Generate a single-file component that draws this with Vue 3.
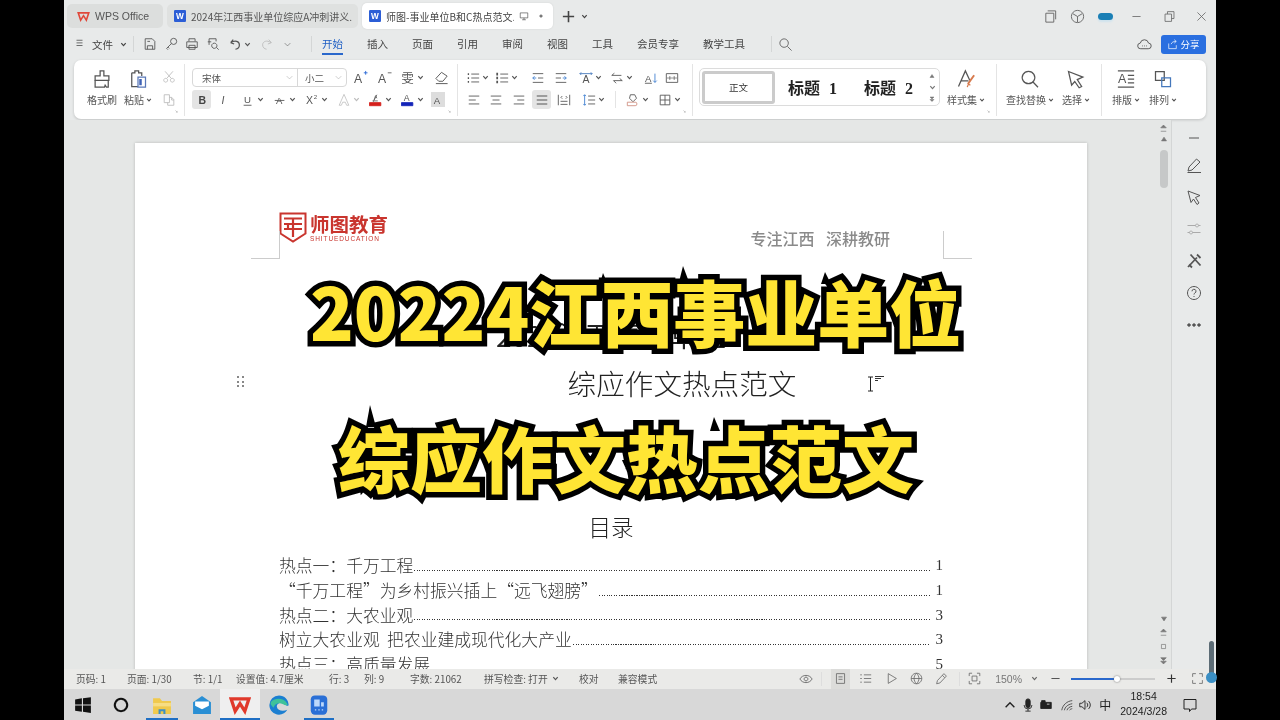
<script setup>
import { h } from 'vue'

const P = (d, s = 'currentColor', f = 'none', sw = 1) => ({ d, s, f, sw })
const T = (t, x, y, size, c = 'currentColor', w = 400, st = 'normal') => ({ t, x, y, size, c, w, st })

const icons = {
  brush: [P('M6.5 1.5h3v4h4v3.5h-11V5.5h4z'), P('M2.5 9v5.5h7.5l.5-1.5 1 1.5h1.5V9')],
  paste: [P('M3 3h2.5V1.5h3V3H11v2.5M3 3v11h5'), P('M8 6.5h6v8H8z', '#5a78b8'), P('M10 8v5', '#3f62b5', 'none', 2)],
  cut: [P('M3.5 1.5l7 8M12.5 1.5l-7 8'), P('M4.2 9.5a2.2 2.2 0 1 0 .01 0zM11.8 9.5a2.2 2.2 0 1 0 .01 0z')],
  copy: [P('M2.5 2h6v9h-6z'), P('M8 5h3l2.5 2.5V14H6.5v-3'), P('M11 5v3h2.5')],
  aplus: [T('A', 1, 13.5, 13), P('M11.5 3h4M13.5 1v4', '#2d6bd6')],
  aminus: [T('A', 1, 13.5, 13), P('M11.5 3h4', '#666')],
  wen: [T('雯', 1.5, 13.5, 13)],
  eraser: [P('M2 9l6-6.5 6 4-4.5 5.5H5z'), P('M2 14.5h12.5')],
  b: [T('B', 4, 12.5, 12, '#444', 700)],
  i: [T('I', 5, 12.5, 12, '#555', 400, 'italic')],
  u: [T('U', 3.5, 11.5, 11), P('M3 14h9')],
  strike: [T('A', 3.5, 12.5, 11), P('M2 8.5h11')],
  sup: [T('X', 1, 13, 12), T('2', 10, 7, 7)],
  glow: [P('M8 1.5L2.5 14h2.5l1.5-3.5h3L11 14h2.5z', '#c4c4c4')],
  fcolor: [P('M5 10l2.5-7 1.5 3M4 9h6M9 2L6 8', '#666'), P('M.5 11h13v3.5H.5z', '#d5201c', '#d5201c')],
  bcolor: [T('A', 3, 9.5, 10), P('M.5 11h13v3.5H.5z', '#1324b8', '#1324b8')],
  abox: [T('A', 3, 12.5, 11)],
  bul: [P('M6 3.5h9M6 8h9M6 12.5h9'), P('M2 3.5h1.5M2 8h1.5M2 12.5h1.5', 'currentColor', 'none', 2)],
  num: [P('M6 3.5h9M6 8h9M6 12.5h9'), P('M2.5 2v3M2.5 6.5v3M2.5 11v3', 'currentColor', 'none', 2)],
  dedent: [P('M2 3h12M8 8h6M2 13h12'), P('M6 8H2M4 6L2 8l2 2', '#3f7fd0')],
  indent: [P('M2 3h12M2 8h6M2 13h12'), P('M10 8h4M12 6l2 2-2 2', '#3f7fd0')],
  aspace: [T('A', 4, 14, 12), P('M1 3h14M2.5 1.5L1 3l1.5 1.5M13.5 1.5L15 3l-1.5 1.5', '#4477bb')],
  swap: [P('M2 5h11M5 2.5L2 5M4 11h10M11 8.5l3 2.5M4 11l3 3')],
  sort: [T('A', 1, 12, 11), P('M1 14h8'), P('M12.5 3v10M10.5 11l2 2 2-2', '#3f7fd0')],
  tbl: [P('M1.5 3h13M1.5 13h13M1.5 3v10M14.5 3v10M5.5 6v4M10.5 6v4'), P('M1.5 8h13', '#888')],
  al: [P('M2 3.5h12M2 8h8M2 12.5h12')],
  ac: [P('M2 3.5h12M4 8h8M2 12.5h12')],
  ar: [P('M2 3.5h12M6 8h8M2 12.5h12')],
  aj: [P('M2 3.5h12M2 8h12M2 12.5h12', 'currentColor', 'none', 1.2)],
  dist: [P('M1.5 2v12M14.5 2v12M4 13h8M4 9.5h8M6 3.5L4.5 5 6 6.5M10 3.5L11.5 5 10 6.5')],
  lsp: [P('M7 3.5h8M7 8h8M7 12.5h8'), P('M3 2v12M1.5 3.5L3 2l1.5 1.5M1.5 12.5L3 14l1.5-1.5', '#3f7fd0')],
  shade: [P('M5 2h5l2 4-4 4-4-4z'), P('M1.5 10.5h9a2 2 0 0 1 0 4h-9z', '#cf8f80')],
  border: [P('M2.5 2.5h11v11h-11zM8 2.5v11M2.5 8h11')],
  style: [P('M2 14L7.5 1.5 11 9M4 9.5h6'), P('M14.5 5l-5 7', '#d77a4d', 'none', 1.6), P('M9 14.5l1-2.5 1.5 1', '#d77a4d')],
  find: [P('M6.8 1.8a5 5 0 1 0 .01 0zM10.4 10.4l4 4.2')],
  sel: [P('M2 2l11.5 4.5-4.5 2 3.5 5.5-2 1-3.5-5-2.5 3z')],
  lay: [P('M1.5 1.5h13'), T('A', 1.5, 11.5, 10), P('M9.5 5h5M9.5 8h5M9.5 11h5M1.5 14.5h13')],
  arr: [P('M2 2h7v7H2z'), P('M7 7h7v7H7z', '#4477bb')],
  launch: [P('M1 1l5 5M6 2.5V6H2.5')],
  menu: [P('M2 3h8M2 6.5h8M2 10h8')],
  save: [P('M2.5 2h8l3 3v9h-11z M5 14v-4h6v4 M5 5h3')],
  key: [P('M11 1.5a3.5 3.5 0 1 1-3.5 3.5 3.5 3.5 0 0 1 3.5-3.5z M8.5 7.5L3 13l1.5 1.5 M4.5 11.5l1.5 1.5')],
  print: [P('M4.5 5V2h7v3M2 5.5h12v6.5H2zM4.5 9.5h7V14h-7z')],
  prev: [P('M3.5 9V2h8v3M2 5.5h4'), P('M9.5 7a3 3 0 1 0 .01 0zM12 12l2.5 2.5')],
  undo: [P('M3 6.5L6 3M3 6.5L7 8M3.5 6.5C8 3 13 5 13 9c0 3-2 4.5-4.5 5', 'currentColor', 'none', 1.4)],
  redo: [P('M13 6.5L10 3M13 6.5L9 8M12.5 6.5C8 3 3 5 3 9c0 3 2 4.5 4.5 5')],
  down: [P('M3 5.5l5 5 5-5')],
  chev: [P('M3 5l5 5.500 5-5.500', 'currentColor', 'none', 2.800)],
  search: [P('M6.5 2a4.5 4.5 0 1 0 .01 0zM10 10l4.5 4.5')],
  cloud: [P('M4 12.5a3 3 0 0 1-.5-6 4.5 4.5 0 0 1 8.8 0 3 3 0 0 1-.3 6z'), P('M5.5 9.5h.8M7.7 9.5h.8M9.8 9.5h.8')],
  share: [P('M2.5 6.5v7.5h11V9M6 7.5c1-3 3.5-4 7-4M10.5 1l3 2.5-3 2.5', '#fff')],
  layers: [P('M3 4.5h8.5V14H3zM5 2h8.5v9')],
  cube: [P('M8 1.5a6.5 6.5 0 1 0 .01 0zM3 5l5 3 5-3M8 8v6')],
  min: [P('M3 8h10')],
  rest: [P('M2.5 5h8v9h-8zM5.5 5V2h8v8.5h-3')],
  close: [P('M3 3l10 10M13 3L3 13')],
  plus: [P('M8 2v12M2 8h12', 'currentColor', 'none', 1.7)],
  dot: [P('M8 6a2 2 0 1 0 .01 0z', '#777', '#777')],
  monitor: [P('M2 3h12v8H2zM8 11v3M5 14h6')],
  pen: [P('M10.5 2l3.5 3L6 13 2 14l1-4zM1.5 15.5h13.5')],
  cursor: [P('M2 2l12 4.5-4.5 2L13 14l-2 1.5-3.5-5.5L5 13.5z')],
  sliders: [P('M1.5 4.5h8M12.5 4.5h2M1.5 11.5h2M6.5 11.5h8'), P('M11 3a1.5 1.5 0 1 0 .01 0zM5 10a1.5 1.5 0 1 0 .01 0z')],
  tools: [P('M2 14L11 4.5M4.5 1.5l10 11M3 11.5l3 3M11 1.5l3.5 3.5', 'currentColor', 'none', 1.8)],
  help: [P('M8 1.5a6.5 6.5 0 1 0 .01 0z'), P('M6 6.3a2 2 0 1 1 2.8 1.8c-.6.3-.8.7-.8 1.4M8 11v1')],
  more: [P('M3 6.700a1.300 1.300 0 1 0 .01 0zM8 6.700a1.300 1.300 0 1 0 .01 0zM13 6.700a1.300 1.300 0 1 0 .01 0z', 'currentColor', 'currentColor')],
  eye: [P('M1 8c3-5.5 11-5.5 14 0-3 5.5-11 5.5-14 0zM8 5.8a2.2 2.2 0 1 0 .01 0z')],
  page: [P('M3 2h10v12H3zM5.5 6h5M5.5 9h5')],
  outline: [P('M6 3.5h9M6 8h9M6 12.5h9M1.5 3.5h2M1.5 8h2M1.5 12.5h2')],
  play: [P('M4 2l10 6-10 6z')],
  globe: [P('M8 1.5a6.5 6.5 0 1 0 .01 0zM1.5 8h13M8 1.5c-4 4-4 9 0 13M8 1.5c4 4 4 9 0 13')],
  edit: [P('M11 2l3 3-8 8.5-4 1 1-4zM9 4l3 3')],
  fit: [P('M1.5 5V1.5H5M11 1.5h3.5V5M1.5 11v3.5H5M11 14.5h3.5V11M5 5h6v6H5z')],
  full: [P('M2 6V2h4M10 2h4v4M2 10v4h4M10 14h4v-4')],
  up: [P('M3 10.5l5-5 5 5', 'currentColor', 'none', 1.6)],
  mic: [P('M8 1a2.5 2.5 0 0 1 2.5 2.5v5a2.5 2.5 0 0 1-5 0v-5A2.5 2.5 0 0 1 8 1z', '#222', '#222'), P('M8 12v3M5 15h6M3.5 8a4.5 4.5 0 0 0 9 0', '#222')],
  batt: [P('M2 5h12v7H2z', '#222', '#222'), P('M3 3h4v2H3z', '#222', '#222'), P('M9 7h3', '#d8d8d8')],
  wifi: [P('M2 14C3 8 8 3.5 14 3M5 14c.7-3.5 3.5-6.5 9-7.5M8 14c.5-2 2.5-4 6-4.5M11 14c.3-1 1.500-1.500 3-1.800', '#444')],
  vol: [P('M2 6h2.500L8 3v10L4.500 10H2zM10 5.500c1.500 1.500 1.500 3.500 0 5M12 3.500c2.700 2.700 2.700 6.300 0 9', '#222')],
  note: [P('M2 2.500h12v9.500h-4.500L7.500 14.500V12H2z', '#222')],
  win: [P('M1 3l6-1v5.500H1zM8 2l7-1v6.500H8zM1 8.500h6V14L1 13zM8 8.500h7V15l-7-1z', 'none', '#111')],
  ring: [P('M8 2.500a5.500 5.500 0 1 0 .01 0z', '#111', 'none', 1.8)],
  folder: [P('M1.500 3h5l1.500 2h6.500v9.500H1.500z', 'none', '#f0c94d'), P('M1.500 6.500h13V9h-13z', 'none', '#f7dd84'), P('M5.500 11h5v3.500h-1.500V12.500h-2v2H5.500z', 'none', '#3d8fc5')],
  mail: [P('M1.500 6L8 1.500 14.500 6v8.500h-13z', 'none', '#2a8fd4'), P('M3 5.500h10v3L8 11 3 8.500z', 'none', '#fff')],
  wps: [P('M1.500 3.500h13l-3 9-3.500-5.500-3.500 5.500z', '#e0392b', 'none', 2.400)],
  edge: [P('M8 1a7 7 0 0 0-7 7c0 3.900 3.100 7 7 7 2.600 0 4.900-1.400 6-3.500-3 1.500-7 .8-7.500-2C6 7 9 5.500 12 7.500c2 1.300 2.500 1.500 3 .5 0-4-3.100-7-7-7z', 'none', '#1b7fd1'), P('M2 6c2-3 9-4 12 1 1 1.500-1.500 1.500-3 .5C8 6 5 7 4 10 3 8.500 1.500 8 2 6z', 'none', '#3fc29a')],
  appb: [P('M5 1h6A3 3 0 0 1 14 4v8a3 3 0 0 1-3 3H5a3 3 0 0 1-3-3V4a3 3 0 0 1 3-3z', 'none', '#2a6fd6'), P('M4.500 4h4v5h-4zM9.500 6h2v3h-2z', 'none', '#bcd8fb'), P('M5 11.500h1M7.500 11.500h1M10 11.500h1', '#bcd8fb')],
  wdoc: [P('M1.500 0h13A1.500 1.500 0 0 1 16 1.500v13a1.500 1.500 0 0 1-1.500 1.500h-13A1.500 1.500 0 0 1 0 14.500v-13A1.500 1.500 0 0 1 1.500 0z', 'none', '#2c5ed6'), T('W', 2.800, 12.500, 11, '#fff', 700)],
  wpslogo: [P('M1.500 3.500h13l-3 9-3.500-5.500-3.500 5.500z', '#e0483a', 'none', 2)],
  triup: [P('M4 11l4-6 4 6z', '#777', '#777')],
  pgup: [P('M4 7l4-4 4 4zM4 12h8', '#777', '#777')],
  pgdn: [P('M4 4l4 4 4-4zM4 9l4 4 4-4z', '#777', '#777')],
  square: [P('M5 5h6v6H5z', '#777')],
}

const Ic = (props) => {
  const els = icons[props.name] || []
  return h('svg', { class: 'ic', width: props.s || 16, height: props.s || 16, viewBox: '0 0 16 16' },
    els.map((e) => e.t
      ? h('text', { x: e.x, y: e.y, 'font-size': e.size, 'font-weight': e.w, 'font-style': e.st, fill: e.c, 'font-family': '"Liberation Sans","Noto Sans CJK SC",sans-serif' }, e.t)
      : h('path', { d: e.d, stroke: e.s, fill: e.f, 'stroke-width': e.sw })))
}
Ic.props = ['name', 's']

const I = (i, w, o = {}) => ({ i, w, ...o })
const S = (w) => ({ w })

const fontRow1 = [I('aplus', 26), I('aminus', 23), I('wen', 32, { c: 1 }), I('eraser', 26)]
const fontRow2 = [I('b', 19, { on: 1 }), I('i', 25), I('u', 32, { c: 1 }), I('strike', 32, { c: 1 }), I('sup', 32, { c: 1 }), I('glow', 32, { c: 1, dim: 1 }), I('fcolor', 32, { c: 1 }), I('bcolor', 32, { c: 1 }), I('abox', 19, { box: 1 })]
const paraRow1 = [I('bul', 28, { c: 1 }), I('num', 30, { c: 1 }), S(6), I('dedent', 22), S(1), I('indent', 22), I('aspace', 36, { c: 1 }), I('swap', 26, { c: 1 }), S(6), I('sort', 22), I('tbl', 20)]
const paraRow2 = [I('al', 22), I('ac', 22), S(1), I('ar', 22), S(2), I('aj', 19, { on: 1 }), S(2), I('dist', 22), I('lsp', 36, { c: 1 }), S(4), { sep: 1, w: 1 }, S(5), I('shade', 32, { c: 1 }), I('border', 32, { c: 1 })]

const tail = [
  { t: '样式集', i: 'style', w: 46, s: 20, c: 1 },
]
const findGroup = [
  { t: '查找替换', i: 'find', w: 56, s: 20, c: 1 },
  { t: '选择', i: 'sel', w: 36, s: 20, c: 1 },
]
const layGroup = [
  { t: '排版', i: 'lay', w: 38, s: 20, c: 1 },
  { t: '排列', i: 'arr', w: 36, s: 20, c: 1 },
]

const menus = ['开始', '插入', '页面', '引用', '审阅', '视图', '工具', '会员专享', '教学工具']
const quick = [I('save', 21), I('key', 21), I('print', 21), I('prev', 21), I('undo', 33, { c: 1 }), I('redo', 21, { dim: 1 }), I('down', 21)]

const stats = [
  { t: '页码: 1', w: 51 }, { t: '页面: 1/30', w: 66 }, { t: '节: 1/1', w: 43 }, { t: '设置值: 4.7厘米', w: 93 },
  { t: '行: 3', w: 35 }, { t: '列: 9', w: 46 }, { t: '字数: 21062', w: 74 }, { t: '拼写检查: 打开', w: 95, c: 1 },
  { t: '校对', w: 39 }, { t: '兼容模式', w: 60 },
]
const sideIcons = [
  { n: 'min', c: '' }, { n: 'pen', c: '' }, { n: 'cursor', c: '' }, { n: 'sliders', c: 'dim' },
  { n: 'tools', c: '' }, { n: 'help', c: '' }, { n: 'more', c: '' },
]
const toc = [
  { t: '热点一：千万工程', n: 1 },
  { t: '“千万工程”为乡村振兴插上“远飞翅膀”', n: 1 },
  { t: '热点二：大农业观', n: 3 },
  { t: '树立大农业观  把农业建成现代化大产业', n: 3 },
  { t: '热点三：高质量发展', n: 5 },
]
const taskbar = [
  { n: 'win', w: 38, s: 18 }, { n: 'ring', w: 38, s: 18 }, { n: 'folder', w: 44, s: 22, run: 1 },
  { n: 'mail', w: 36, s: 22 }, { n: 'wps', w: 40, s: 22, run: 1, act: 1 }, { n: 'edge', w: 38, s: 22 }, { n: 'appb', w: 42, s: 22, run: 1 },
]
const tray = ['up', 'mic', 'batt', 'wifi', 'vol']
const spikes = [
  [603, 273, 14], [683, 266, 16], [825, 272, 12], [370, 405, 22], [714, 417, 14],
]
const spikePath = (x, y, hgt) => `M${x} ${y}L${x + 6} ${y + hgt}H${x - 4}z`
</script>

<template>
  <div class="screen">
    <div class="win">
      <header class="tabs">
        <div class="tab home"><Ic name="wpslogo" :s="13" /><span>WPS Office</span></div>
        <div class="tab doc"><Ic name="wdoc" :s="12" /><span class="tab-t">2024年江西事业单位综应A冲刺讲义.</span></div>
        <div class="tab cur"><Ic name="wdoc" :s="12" /><span class="tab-t short">师图-事业单位B和C热点范文.</span><Ic name="monitor" :s="10" /><Ic name="dot" :s="10" class="dotic" /></div>
        <div class="plus"><Ic name="plus" :s="15" /><Ic name="chev" :s="7" /></div>
        <div class="winbtns">
          <Ic name="layers" :s="15" /><Ic name="cube" :s="15" />
          <span class="hat"></span>
          <Ic name="min" :s="13" /><Ic name="rest" :s="13" /><Ic name="close" :s="13" />
        </div>
      </header>

      <nav class="menubar">
        <div class="file"><Ic name="menu" :s="12" /><span>文件</span><Ic name="chev" :s="7" /></div>
        <i class="vsep"></i>
        <div class="quick">
          <div v-for="(q, k) in quick" :key="k" class="q" :class="{ dim: q.dim }" :style="{ width: q.w + 'px' }">
            <Ic :name="q.i" :s="q.i === 'down' ? 9 : 14" /><Ic v-if="q.c" name="chev" :s="7" />
          </div>
        </div>
        <i class="vsep v2"></i>
        <div class="menus">
          <span v-for="(m, k) in menus" :key="m" :class="{ active: k === 0 }">{{ m }}</span>
        </div>
        <i class="vsep v3"></i>
        <Ic name="search" :s="15" class="msearch" />
        <div class="mright">
          <Ic name="cloud" :s="15" />
          <button class="share"><Ic name="share" :s="11" /><span>分享</span></button>
        </div>
      </nav>

      <div class="ribbon-wrap">
        <section class="ribbon">
          <div class="grp g1">
            <div class="big w36"><Ic name="brush" :s="20" /><span>格式刷</span></div>
            <div class="big w36"><Ic name="paste" :s="20" /><span>粘贴<Ic name="chev" :s="6" class="inl" /></span></div>
            <div class="smallcol"><Ic name="cut" :s="14" /><Ic name="copy" :s="14" /></div>
            <Ic name="launch" :s="6" class="launch" />
          </div>
          <div class="grp g2">
            <div class="rows">
              <div class="row">
                <div class="fontbox">
                  <span class="fname">宋体<Ic name="down" :s="9" /></span>
                  <span class="fsize">小二<Ic name="down" :s="9" /></span>
                </div>
                <div v-for="(b, k) in fontRow1" :key="k" class="tb" :style="{ width: b.w + 'px' }"><Ic :name="b.i" :s="15" /><Ic v-if="b.c" name="chev" :s="7" /></div>
              </div>
              <div class="row">
                <div v-for="(b, k) in fontRow2" :key="k" class="tb" :class="{ on: b.on, dim: b.dim }" :style="{ width: b.w + 'px' }">
                  <span v-if="b.box" class="abox"><Ic :name="b.i" :s="14" /></span>
                  <Ic v-else :name="b.i" :s="14" /><Ic v-if="b.c" name="chev" :s="7" />
                </div>
              </div>
            </div>
            <Ic name="launch" :s="6" class="launch" />
          </div>
          <div class="grp g3">
            <div class="rows">
              <div class="row">
                <template v-for="(b, k) in paraRow1" :key="k">
                  <div v-if="b.i" class="tb" :style="{ width: b.w + 'px' }"><Ic :name="b.i" :s="14" /><Ic v-if="b.c" name="chev" :s="7" /></div>
                  <i v-else class="sp" :style="{ width: b.w + 'px' }"></i>
                </template>
              </div>
              <div class="row">
                <template v-for="(b, k) in paraRow2" :key="k">
                  <div v-if="b.i" class="tb" :class="{ on: b.on }" :style="{ width: b.w + 'px' }"><Ic :name="b.i" :s="14" /><Ic v-if="b.c" name="chev" :s="7" /></div>
                  <i v-else-if="b.sep" class="rsep"></i>
                  <i v-else class="sp" :style="{ width: b.w + 'px' }"></i>
                </template>
              </div>
            </div>
            <Ic name="launch" :s="6" class="launch" />
          </div>
          <div class="grp g4">
            <div class="styles">
              <div class="st-normal">正文</div>
              <div class="st-h h1">标题 1</div>
              <div class="st-h h2">标题 2</div>
              <div class="stepper"><Ic name="triup" :s="8" /><Ic name="chev" :s="7" /><Ic name="pgdn" :s="8" /></div>
            </div>
            <div v-for="b in tail" :key="b.t" class="big" :style="{ width: b.w + 'px' }"><Ic :name="b.i" :s="b.s" /><span>{{ b.t }}<Ic name="chev" :s="6" class="inl" /></span></div>
            <Ic name="launch" :s="6" class="launch" />
          </div>
          <div class="grp g5">
            <div v-for="b in findGroup" :key="b.t" class="big" :style="{ width: b.w + 'px' }"><Ic :name="b.i" :s="b.s" /><span>{{ b.t }}<Ic name="chev" :s="6" class="inl" /></span></div>
          </div>
          <div class="grp g6">
            <div v-for="b in layGroup" :key="b.t" class="big" :style="{ width: b.w + 'px' }"><Ic :name="b.i" :s="b.s" /><span>{{ b.t }}<Ic name="chev" :s="6" class="inl" /></span></div>
          </div>
        </section>
      </div>

      <main class="docarea">
        <div class="view">
          <article class="page">
            <i class="crop tl"></i><i class="crop tr"></i>
            <div class="pghead">
              <div class="logo">
                <svg class="shield" width="28" height="31" viewBox="0 0 28 31">
                  <path d="M1.500 1.500h25v20l-12.500 8-12.500-8z" fill="none" stroke="#c9352e" stroke-width="2" />
                  <path d="M5 6.500h18M5 12h18M5 17h18M14 6.500V25M9 12v5" fill="none" stroke="#c9352e" stroke-width="2.200" />
                </svg>
                <div class="brand"><b>师图教育</b><small>SHITUEDUCATION</small></div>
              </div>
              <div class="motto">专注江西 深耕教研</div>
            </div>
            <h1 class="t0">2024江西事业单位</h1>
            <h2 class="t1">综应作文热点范文</h2>
            <h3 class="t2">目录</h3>
            <ul class="toc">
              <li v-for="(r, k) in toc" :key="k"><span class="toct">{{ r.t }}</span><i class="dots"></i><span class="tocn">{{ r.n }}</span></li>
            </ul>
            <div class="grip"><i v-for="n in 6" :key="n"></i></div>
            <div class="ibeam"><svg width="18" height="16" viewBox="0 0 18 16"><path d="M1 1h5M1 15h5M3.500 1v14" stroke="#222" fill="none" /><path d="M8 0.500h9M8 2.500h6M8 4.500h3" stroke="#333" fill="none" /></svg></div>
          </article>
        </div>
        <div class="vscroll">
          <Ic name="pgup" :s="11" /><Ic name="triup" :s="10" />
          <div class="thumb"></div>
          <div class="vend"><Ic name="triup" :s="10" class="flip" /><Ic name="pgup" :s="11" /><Ic name="square" :s="11" /><Ic name="pgdn" :s="11" /></div>
        </div>
        <aside class="side">
          <div v-for="s in sideIcons" :key="s.n" class="sicon" :class="s.c"><Ic :name="s.n" :s="16" /></div>
        </aside>
      </main>

      <footer class="status">
        <div class="stats">
          <span v-for="s in stats" :key="s.t" :style="{ width: s.w + 'px' }">{{ s.t }}<Ic v-if="s.c" name="chev" :s="7" class="inl" /></span>
        </div>
        <div class="sright">
          <Ic name="eye" :s="14" /><i class="ssep"></i>
          <span class="pagebtn"><Ic name="page" :s="13" /></span>
          <Ic name="outline" :s="13" class="m1" /><Ic name="play" :s="13" class="m2" /><Ic name="globe" :s="13" class="m3" /><Ic name="edit" :s="13" class="m3" />
          <i class="ssep s2"></i>
          <Ic name="fit" :s="13" class="m4" />
          <span class="zoom">150%</span><Ic name="chev" :s="7" class="m5" />
          <Ic name="min" :s="13" class="m6" />
          <div class="slider"><i class="fill"></i><i class="knob"></i></div>
          <Ic name="plus" :s="11" class="m7" /><Ic name="full" :s="13" class="m8" />
        </div>
      </footer>

      <div class="taskbar">
        <div class="apps">
          <div v-for="a in taskbar" :key="a.n" class="app" :class="{ act: a.act, run: a.run }" :style="{ width: a.w + 'px' }"><Ic :name="a.n" :s="a.s" /></div>
        </div>
        <div class="tray">
          <Ic v-for="n in tray" :key="n" :name="n" :s="14" />
          <span class="ime">中</span>
          <div class="clock"><span>18:54</span><span>2024/3/28</span></div>
          <Ic name="note" :s="16" class="noteic" />
        </div>
      </div>
    </div>

    <div class="rail"><i></i></div>
    <svg class="spikes" width="1280" height="720" viewBox="0 0 1280 720"><path v-for="(p, k) in spikes" :key="k" :d="spikePath(p[0], p[1], p[2])" fill="#000" /></svg>
    <div class="cap c1">20224江西事业单位</div>
    <div class="cap c2">综应作文热点范文</div>
  </div>
</template>

<style scoped>
.screen { position: relative; width: 1280px; height: 720px; background: #000; overflow: hidden; display: flex; justify-content: center; font-family: "Noto Sans CJK SC", "Liberation Sans", sans-serif; color: #444; filter: blur(.3px); }
.win { width: 1152px; height: 720px; background: #e8eaea; display: flex; flex-direction: column; }
i { font-style: normal; }

.tabs { height: 32px; display: flex; align-items: center; padding-left: 3px; gap: 4px; flex: none; box-sizing: border-box; }
.tab { height: 24px; border-radius: 5px; display: flex; align-items: center; font-size: 10px; color: #555; flex: none; box-sizing: border-box; }
.home { width: 96px; background: #dcdedd; padding-left: 10px; gap: 5px; font-family: "Liberation Sans", sans-serif; font-size: 10.5px; }
.doc { width: 191px; background: #dfe1e0; padding-left: 7px; gap: 5px; }
.cur { width: 191px; height: 26px; background: #fff; padding-left: 7px; gap: 5px; color: #444; box-shadow: 0 0 2px rgba(0,0,0,.1); }
.tab-t { white-space: nowrap; overflow: hidden; width: 165px; }
.short { width: 128px; }
.dotic { margin-left: 2px; }
.plus { display: flex; align-items: center; gap: 5px; margin-left: 4px; color: #444; }
.winbtns { margin-left: auto; display: flex; align-items: center; color: #666; padding-right: 8px; }
.winbtns > :nth-child(1) { margin-right: 12px; }
.winbtns > :nth-child(2) { margin-right: 13px; }
.winbtns > :nth-child(4) { margin-right: 20px; }
.winbtns > :nth-child(5) { margin-right: 19px; }
.hat { width: 15px; height: 7px; border-radius: 4px; background: #1a7fb5; margin-right: 17px; box-shadow: 0 2px 2px #cfe3ee; }

.menubar { height: 28px; flex: none; display: flex; align-items: center; font-size: 10.500px; color: #444; padding: 0 0 4px 11px; box-sizing: border-box; }
.file { display: flex; align-items: center; gap: 5px; width: 58px; }
.file > :last-child { margin-left: 2px; }
.vsep { width: 1px; height: 16px; background: #d4d6d6; flex: none; }
.quick { display: flex; margin-left: 5px; margin-right: 7px; width: 165px; flex: none; }
.q { display: flex; align-items: center; justify-content: center; gap: 2px; color: #555; flex: none; }
.q.dim { color: #bbb; }
.menus { display: flex; gap: 24px; margin-left: 10px; line-height: 22px; white-space: nowrap; }
.menus span { height: 22px; position: relative; }
.menus .active { color: #1f5fc4; }
.menus .active::after { content: ""; position: absolute; left: 0; right: 0; bottom: 0; height: 2px; background: #2a68cc; }
.v3 { margin-left: 26px; }
.msearch { margin-left: 6px; color: #666; }
.mright { margin-left: auto; display: flex; align-items: center; gap: 9px; padding-right: 10px; color: #555; }
.share { width: 45px; height: 19px; border: 0; border-radius: 3px; background: #2a6fe0; color: #fff; font: inherit; font-size: 9.500px; display: flex; align-items: center; justify-content: center; gap: 2px; padding: 0; }

.ribbon-wrap { height: 60px; flex: none; padding: 0 10px; box-sizing: border-box; }
.ribbon { height: 59px; background: #fff; border-radius: 7px; box-shadow: 0 1px 3px rgba(0,0,0,.18); display: flex; }
.grp { position: relative; display: flex; align-items: flex-start; margin: 4px 0; height: 52px; border-right: 1px solid #e4e4e4; flex: none; box-sizing: border-box; }
.g1 { width: 111px; padding-left: 10px; }
.g2 { width: 273px; padding-left: 7px; }
.g3 { width: 235px; padding-left: 5px; }
.g4 { width: 304px; padding-left: 6px; }
.g5 { width: 105px; padding-left: 5px; gap: 0; }
.g6 { width: 103px; border-right: 0; padding-left: 5px; }
.launch { position: absolute; right: 3px; bottom: 0; color: #888; }
.big { display: flex; flex-direction: column; align-items: center; font-size: 10px; color: #555; padding-top: 5px; gap: 4px; white-space: nowrap; flex: none; }
.big span { display: flex; align-items: center; gap: 2px; line-height: 14px; }
.w36 { width: 36px; }
.smallcol { width: 26px; display: flex; flex-direction: column; align-items: center; gap: 9px; padding-top: 6px; color: #bbb; }
.rows { display: flex; flex-direction: column; padding-top: 4px; gap: 3px; }
.row { display: flex; height: 19px; align-items: center; }
.fontbox { width: 155px; height: 19px; border: 1px solid #d8d8d8; border-radius: 4px; box-sizing: border-box; display: flex; font-size: 9.500px; color: #555; flex: none; }
.fname { width: 105px; padding: 0 3px 0 9px; display: flex; align-items: center; justify-content: space-between; border-right: 1px solid #d8d8d8; box-sizing: border-box; }
.fsize { flex: 1; padding: 0 3px 0 7px; display: flex; align-items: center; justify-content: space-between; }
.fname .ic, .fsize .ic { color: #aaa; }
.tb { height: 19px; display: flex; align-items: center; justify-content: center; gap: 2px; color: #555; flex: none; border-radius: 3px; }
.tb.on { background: #e4e4e4; }
.tb.dim { color: #bbb; }
.abox { background: #ddd; width: 14px; height: 15px; display: flex; align-items: center; justify-content: center; }
.sp { display: block; flex: none; height: 1px; }
.rsep { display: block; width: 1px; height: 17px; background: #e4e4e4; flex: none; }
.styles { width: 241px; height: 38px; border: 1px solid #dcdcdc; border-radius: 5px; margin-top: 4px; box-sizing: border-box; display: flex; align-items: center; flex: none; position: relative; }
.st-normal { width: 73px; height: 33px; margin-left: 2px; border: 3px solid #cbcbcb; border-radius: 3px; box-sizing: border-box; display: flex; align-items: center; justify-content: center; font-size: 9.500px; color: #333; flex: none; }
.st-h { font-size: 16px; font-weight: 700; color: #222; white-space: nowrap; word-spacing: 5px; font-family: "Liberation Serif", "Noto Sans CJK SC", serif; }
.h1 { margin-left: 13px; width: 76px; }
.h2 { width: 60px; }
.stepper { margin-left: auto; width: 14px; display: flex; flex-direction: column; align-items: center; gap: 4px; color: #777; }
.g4 > .big { margin-left: 3px; }

.docarea { height: 549px; flex: none; display: flex; overflow: hidden; margin-top: 0; }
.view { width: 1092px; padding: 23px 0 0 71px; box-sizing: border-box; overflow: hidden; flex: none; background: #e5e7e6; }
.page { position: relative; width: 952px; height: 900px; background: #fff; box-shadow: 0 0 3px rgba(0,0,0,.2); box-sizing: border-box; padding: 69px 144px 0; }
.crop { position: absolute; width: 28px; height: 27px; top: 88px; }
.tl { left: 116px; border-right: 1px solid #ccc; border-bottom: 1px solid #ccc; }
.tr { left: 808px; border-left: 1px solid #ccc; border-bottom: 1px solid #ccc; }
.pghead { display: flex; justify-content: space-between; height: 31px; padding-right: 53px; }
.logo { display: flex; gap: 3px; color: #c9352e; }
.brand { display: flex; flex-direction: column; line-height: 1; }
.brand b { font-size: 19.500px; font-weight: 700; line-height: 23px; letter-spacing: 0; }
.brand small { font-size: 6.500px; font-family: "Liberation Sans", sans-serif; letter-spacing: .9px; line-height: 8px; }
.motto { color: #8a8a8a; font-size: 16px; font-weight: 500; align-self: flex-end; line-height: 16px; margin-bottom: -3px; word-spacing: 8px; white-space: pre; }
.t0, .t1, .t2 { margin: 0; text-align: center; font-weight: 400; color: #222; }
.t0 { margin-top: 72px; font-size: 28px; line-height: 40px; }
.t1 { margin-top: 8px; font-size: 28.600px; line-height: 40px; padding-left: 142px; font-weight: 300; }
.t2 { margin-top: 108px; font-size: 22.500px; line-height: 30px; font-weight: 300; }
.toc { list-style: none; margin: 12px 0 0; padding: 0; font-size: 16.800px; color: #333; font-weight: 300; }
.toc li { height: 24.800px; line-height: 24.800px; display: flex; align-items: center; white-space: pre; }
.dots { flex: 1; height: 1px; margin: 10px 3px 0 1px; background: repeating-linear-gradient(90deg, #333 0 1px, transparent 1px 2.500px); }
.tocn { font-family: "Liberation Serif", serif; font-size: 15px; width: 9px; text-align: right; margin-left: 1px; }
.grip { position: absolute; left: 102px; top: 233px; width: 7px; height: 12px; display: grid; grid-template-columns: 2px 2px; gap: 2px 3px; }
.grip i { width: 2px; height: 2px; background: #888; }
.ibeam { position: absolute; left: 732px; top: 230px; }

.vscroll { width: 15px; flex: none; display: flex; flex-direction: column; align-items: center; padding-top: 3px; background: #e5e7e6; }
.thumb { width: 8px; height: 38px; margin-top: 6px; border-radius: 4px; background: #c6c8c8; }
.vend { margin-top: auto; display: flex; flex-direction: column; align-items: center; gap: 3px; padding-bottom: 3px; }
.flip { transform: rotate(180deg); }
.side { flex: 1; border-left: 1px solid #d4d6d6; display: flex; flex-direction: column; align-items: center; color: #555; padding-top: 10px; gap: 16px; }
.sicon.dim { color: #aaa; }
.sicon { height: 16px; }
.sicon:first-child { margin-bottom: -5px; }

.status { height: 20px; flex: none; background: #eaeae8; display: flex; align-items: center; font-size: 9.800px; color: #555; padding: 0 0 1px 12px; box-sizing: border-box; }
.stats { display: flex; }
.stats span { display: flex; align-items: center; white-space: nowrap; flex: none; gap: 4px; }
.sright { margin-left: auto; display: flex; align-items: center; color: #666; padding-right: 12px; }
.ssep { width: 1px; height: 14px; background: #ddd; margin: 0 9px 0 8px; }
.s2 { margin: 0 8px 0 11px; }
.pagebtn { width: 19px; height: 20px; background: #dcdcda; display: flex; align-items: center; justify-content: center; }
.m1 { margin-left: 9px; }
.m2 { margin-left: 13px; }
.m3 { margin-left: 12px; }
.zoom { margin-left: 14px; font-size: 10.500px; color: #777; font-family: "Liberation Sans", sans-serif; }
.m5 { margin-left: 9px; }
.m6 { margin-left: 11px; color: #333; }
.slider { width: 84px; height: 2px; background: #ccc; margin-left: 9px; position: relative; }
.fill { position: absolute; left: 0; top: 0; height: 2px; width: 46px; background: #2a68cc; }
.knob { position: absolute; left: 43px; top: -2px; width: 6px; height: 6px; border-radius: 50%; background: #fff; box-shadow: 0 0 2px #666; }
.m7 { margin-left: 11px; color: #333; }
.m8 { margin-left: 14px; }

.taskbar { height: 31px; flex: none; background: #d8d8d8; display: flex; align-items: center; }
.apps { display: flex; height: 31px; }
.app { display: flex; align-items: center; justify-content: center; position: relative; flex: none; box-sizing: border-box; }
.act { background: #efefef; }
.run::after { content: ""; position: absolute; left: 6px; right: 6px; bottom: 0; height: 2px; background: #1f6fc4; }
.act.run::after { left: 0; right: 0; }
.tray { margin-left: auto; display: flex; align-items: center; gap: 4px; color: #222; padding-right: 18px; }
.tray > :nth-child(4) { margin-left: 3px; }
.ime { font-size: 12px; color: #222; margin: 0 -3px 0 3px; }
.clock { display: flex; flex-direction: column; align-items: center; font-size: 10.500px; line-height: 15px; margin: 0 11px 2px 8px; font-family: "Liberation Sans", sans-serif; }

.rail { position: absolute; left: 1209px; top: 641px; width: 5px; height: 38px; background: #5c6c76; border-radius: 3px; }
.rail i { position: absolute; left: -3px; top: 31px; width: 11px; height: 11px; border-radius: 50%; background: #3b8fc4; }

.spikes { position: absolute; left: 0; top: 0; pointer-events: none; }
.cap { position: absolute; white-space: nowrap; font-size: 72px; line-height: 90px; font-weight: 900; color: #ffe534; -webkit-text-stroke: 11px #000; paint-order: stroke fill; font-family: "Noto Sans CJK SC", sans-serif; }
.c1 { left: 310px; top: 265px; }
.c2 { left: 338px; top: 411px; }
</style>

<style>
html, body { margin: 0; background: #000; }
.ic { display: block; flex: none; }
.inl { display: inline-block; }
</style>
